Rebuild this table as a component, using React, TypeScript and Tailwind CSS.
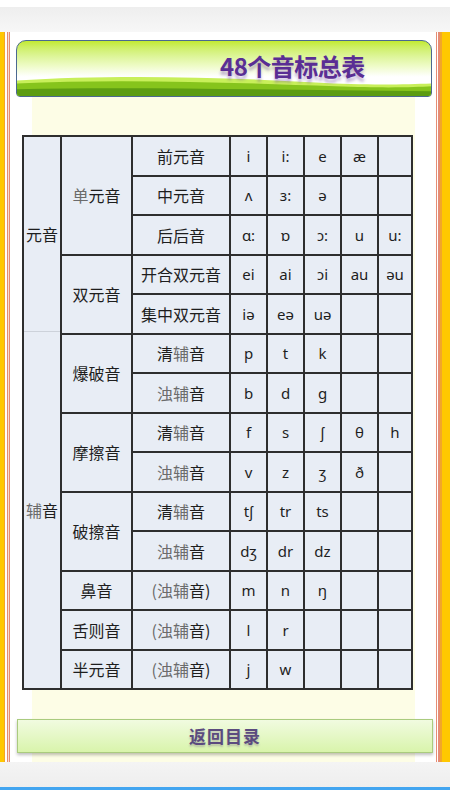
import React from "react";

type Row = { label: React.ReactNode; ipa: string[] };

const cjk = { fontFamily: '"Noto Sans CJK SC", "Noto Sans", sans-serif' };
const ipaFont = { fontFamily: '"Noto Sans", "DejaVu Sans", sans-serif' };

const Gray: React.FC<{ children: React.ReactNode }> = ({ children }) => (
  <span className="text-[#6b6b6b]">{children}</span>
);

const qing = (
  <>
    清<Gray>辅</Gray>音
  </>
);
const zhuo = (
  <>
    <Gray>浊辅</Gray>音
  </>
);
const zhuoParen = (
  <>
    <Gray>(浊辅</Gray>音)
  </>
);

const rows: Row[] = [
  { label: "前元音", ipa: ["i", "i:", "e", "æ", ""] },
  { label: "中元音", ipa: ["ʌ", "ɜ:", "ə", "", ""] },
  { label: "后后音", ipa: ["ɑ:", "ɒ", "ɔ:", "u", "u:"] },
  { label: "开合双元音", ipa: ["ei", "ai", "ɔi", "au", "əu"] },
  { label: "集中双元音", ipa: ["iə", "eə", "uə", "", ""] },
  { label: qing, ipa: ["p", "t", "k", "", ""] },
  { label: zhuo, ipa: ["b", "d", "g", "", ""] },
  { label: qing, ipa: ["f", "s", "ʃ", "θ", "h"] },
  { label: zhuo, ipa: ["v", "z", "ʒ", "ð", ""] },
  { label: qing, ipa: ["tʃ", "tr", "ts", "", ""] },
  { label: zhuo, ipa: ["dʒ", "dr", "dz", "", ""] },
  { label: zhuoParen, ipa: ["m", "n", "ŋ", "", ""] },
  { label: zhuoParen, ipa: ["l", "r", "", "", ""] },
  { label: zhuoParen, ipa: ["j", "w", "", "", ""] },
];

const groups: { label: React.ReactNode; start: number; span: number }[] = [
  { label: <><Gray>单</Gray>元音</>, start: 1, span: 3 },
  { label: "双元音", start: 4, span: 2 },
  { label: "爆破音", start: 6, span: 2 },
  { label: "摩擦音", start: 8, span: 2 },
  { label: "破擦音", start: 10, span: 2 },
  { label: "鼻音", start: 12, span: 1 },
  { label: "舌则音", start: 13, span: 1 },
  { label: "半元音", start: 14, span: 1 },
];

const rowStart = [
  "",
  "row-start-1",
  "row-start-2",
  "row-start-3",
  "row-start-4",
  "row-start-5",
  "row-start-6",
  "row-start-7",
  "row-start-8",
  "row-start-9",
  "row-start-10",
  "row-start-11",
  "row-start-12",
  "row-start-13",
  "row-start-14",
];
const rowSpan = ["", "row-span-1", "row-span-2", "row-span-3"];

const cell = "bg-[#e8edf5] flex items-center justify-center text-[#1e1e1e]";

const App: React.FC = () => {
  return (
    <div className="w-[450px] h-[800px] bg-white overflow-hidden" style={cjk}>
      <div className="h-[7px] bg-white" />
      <div className="h-[25px] bg-gradient-to-b from-[#eeeeee] to-[#f7f7f7]" />

      <div className="flex h-[730px]">
        {/* left stripes */}
        <div className="flex shrink-0">
          <div className="w-[4px] bg-[#ffc800]" />
          <div className="w-[1px] bg-[#f2a52a]" />
          <div className="w-[2px] bg-white" />
          <div className="w-[1px] bg-[#e58c74]" />
          <div className="w-[1px] bg-[#f8dcd2]" />
          <div className="w-[1px] bg-[#e58c74]" />
        </div>

        <div className="flex-1 min-w-0 bg-white flex flex-col">
          {/* header */}
          <div className="relative mt-[8px] ml-[6px] mr-[4px] h-[57px] rounded-t-[10px] rounded-b-[4px] border-[1.5px] border-[#4b6991] bg-gradient-to-b from-[#c3ea2c] via-[#eefbc6] via-45% to-white to-65% overflow-hidden">
            <svg
              className="absolute left-0 bottom-0 w-full h-full"
              viewBox="0 0 416 57"
              preserveAspectRatio="none"
            >
              <path
                d="M0 41 C 90 35, 200 37, 300 43 C 350 46, 390 45, 416 44 L416 57 L0 57 Z"
                fill="#c8ef5a"
              />
              <path
                d="M0 44 C 100 39, 220 43, 320 47 C 370 49, 400 48, 416 47 L416 57 L0 57 Z"
                fill="#86c41c"
              />
              <path
                d="M0 50 C 120 47, 260 51, 416 52 L416 57 L0 57 Z"
                fill="#5c9c12"
              />
            </svg>
            <div className="relative h-full flex items-center pl-[203px] pb-[5px]">
              <span
                className="text-[24px] font-bold text-[#5a2d94] leading-none tracking-[-0.5px]"
                style={{ textShadow: "0 4px 3px rgba(110,70,160,0.4)" }}
              >
                48个音标总表
              </span>
            </div>
          </div>

          {/* yellow panel */}
          <div className="flex-1 min-w-0 ml-[22px] mr-[21px] bg-[#fdfde6] flex flex-col pt-[38px]">
            <div className="-ml-[10px] w-[391px] shrink-0 grid grid-cols-[36px_69px_96px_35px_35px_35px_35px_32px] grid-rows-[repeat(14,37.5px)] gap-[2px] p-[2px] bg-[#2e2e2e] text-[16px]">
              {/* column 1 */}
              <div className="row-start-1 row-span-14 col-start-1 flex flex-col bg-[#e8edf5] text-[#1e1e1e]">
                <div className="h-[195px] border-b border-[#cdd2da] flex items-center justify-center">
                  元音
                </div>
                <div className="flex-1 flex items-center justify-center">
                  <Gray>辅</Gray>音
                </div>
              </div>

              {/* column 2 */}
              {groups.map((g, i) => (
                <div
                  key={i}
                  className={`${cell} col-start-2 ${rowStart[g.start]} ${rowSpan[g.span]}`}
                >
                  {g.label}
                </div>
              ))}

              {/* column 3 + ipa */}
              {rows.map((r, i) => (
                <React.Fragment key={i}>
                  <div className={`${cell} col-start-3 ${rowStart[i + 1]}`}>{r.label}</div>
                  {r.ipa.map((p, j) => (
                    <div
                      key={j}
                      className={`${cell} ${rowStart[i + 1]} text-[15px]`}
                      style={ipaFont}
                    >
                      {p}
                    </div>
                  ))}
                </React.Fragment>
              ))}
            </div>

            <div className="-ml-[15px] w-[416px] shrink-0 mt-[29px] h-[34px] border border-[#aacb7e] bg-gradient-to-b from-[#f1fbe0] to-[#d9f4ab] shadow-[0_2px_3px_rgba(0,0,0,0.25)] flex items-center justify-center">
              <span
                className="text-[17px] font-bold text-[#5b4b7f] tracking-[1px]"
                style={{ textShadow: "0 2px 2px rgba(90,70,120,0.3)" }}
              >
                返回目录
              </span>
            </div>
          </div>
        </div>

        {/* right stripes */}
        <div className="flex shrink-0">
          <div className="w-[1px] bg-[#e58c74]" />
          <div className="w-[1px] bg-white" />
          <div className="w-[2px] bg-[#e58c74]" />
          <div className="w-[2px] bg-[#f2a52a]" />
          <div className="w-[8px] bg-[#ffc800]" />
        </div>
      </div>

      <div className="h-[25px] bg-gradient-to-b from-[#f4f4f4] to-[#eeeeee]" />
      <div className="h-[3px] bg-[#42a5f0]" />
      <div className="h-[10px] bg-white" />
    </div>
  );
};

export default App;
